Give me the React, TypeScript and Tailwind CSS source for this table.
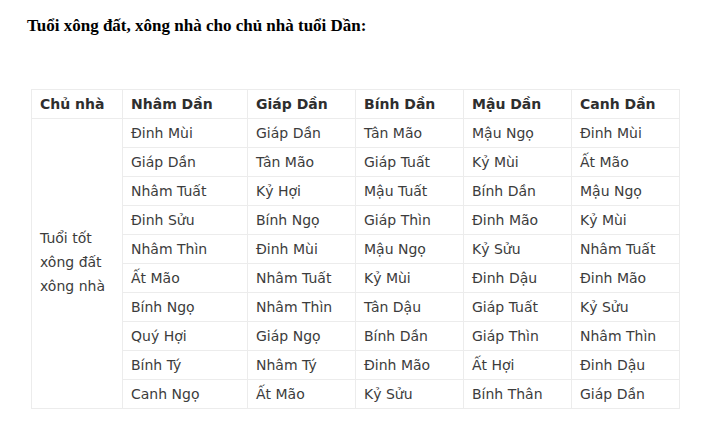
import React from "react";

const header = ["Chủ nhà", "Nhâm Dần", "Giáp Dần", "Bính Dần", "Mậu Dần", "Canh Dần"];
const rows = [
  ["Đinh Mùi", "Giáp Dần", "Tân Mão", "Mậu Ngọ", "Đinh Mùi"],
  ["Giáp Dần", "Tân Mão", "Giáp Tuất", "Kỷ Mùi", "Ất Mão"],
  ["Nhâm Tuất", "Kỷ Hợi", "Mậu Tuất", "Bính Dần", "Mậu Ngọ"],
  ["Đinh Sửu", "Bính Ngọ", "Giáp Thìn", "Đinh Mão", "Kỷ Mùi"],
  ["Nhâm Thìn", "Đinh Mùi", "Mậu Ngọ", "Kỷ Sửu", "Nhâm Tuất"],
  ["Ất Mão", "Nhâm Tuất", "Kỷ Mùi", "Đinh Dậu", "Đinh Mão"],
  ["Bính Ngọ", "Nhâm Thìn", "Tân Dậu", "Giáp Tuất", "Kỷ Sửu"],
  ["Quý Hợi", "Giáp Ngọ", "Bính Dần", "Giáp Thìn", "Nhâm Thìn"],
  ["Bính Tý", "Nhâm Tý", "Đinh Mão", "Ất Hợi", "Đinh Dậu"],
  ["Canh Ngọ", "Ất Mão", "Kỷ Sửu", "Bính Thân", "Giáp Dần"],
];

export default function App() {
  return (
    <div className="w-[707px] h-[433px] bg-white overflow-hidden">
      <h1 className="pl-[27px] pt-[15px] text-[17px] font-bold text-black leading-[22px] font-['Liberation_Serif',serif]">
        Tuổi xông đất, xông nhà cho chủ nhà tuổi Dần:
      </h1>
      <table className="ml-[31px] mt-[52px] border-collapse font-['DejaVu_Sans',sans-serif] text-[14px] text-[#3c3c3c]">
        <colgroup>
          <col className="w-[91px]" />
          <col className="w-[125px]" />
          <col className="w-[108px]" />
          <col className="w-[108px]" />
          <col className="w-[108px]" />
          <col className="w-[108px]" />
        </colgroup>
        <thead>
          <tr className="h-[29px]">
            {header.map((h) => (
              <th key={h} className="border border-[#ececec] px-[8px] leading-[16px] text-left font-bold text-[#2e2e2e] align-middle">
                {h}
              </th>
            ))}
          </tr>
        </thead>
        <tbody>
          {rows.map((r, i) => (
            <tr key={i} className="h-[29px]">
              {i === 0 && (
                <td rowSpan={10} className="border border-[#ececec] px-[8px] pb-[3px] align-middle leading-[24px]">
                  Tuổi tốt<br />xông đất<br />xông nhà
                </td>
              )}
              {r.map((c, j) => (
                <td key={j} className="border border-[#ececec] px-[8px] leading-[16px] align-middle">
                  {c}
                </td>
              ))}
            </tr>
          ))}
        </tbody>
      </table>
    </div>
  );
}
